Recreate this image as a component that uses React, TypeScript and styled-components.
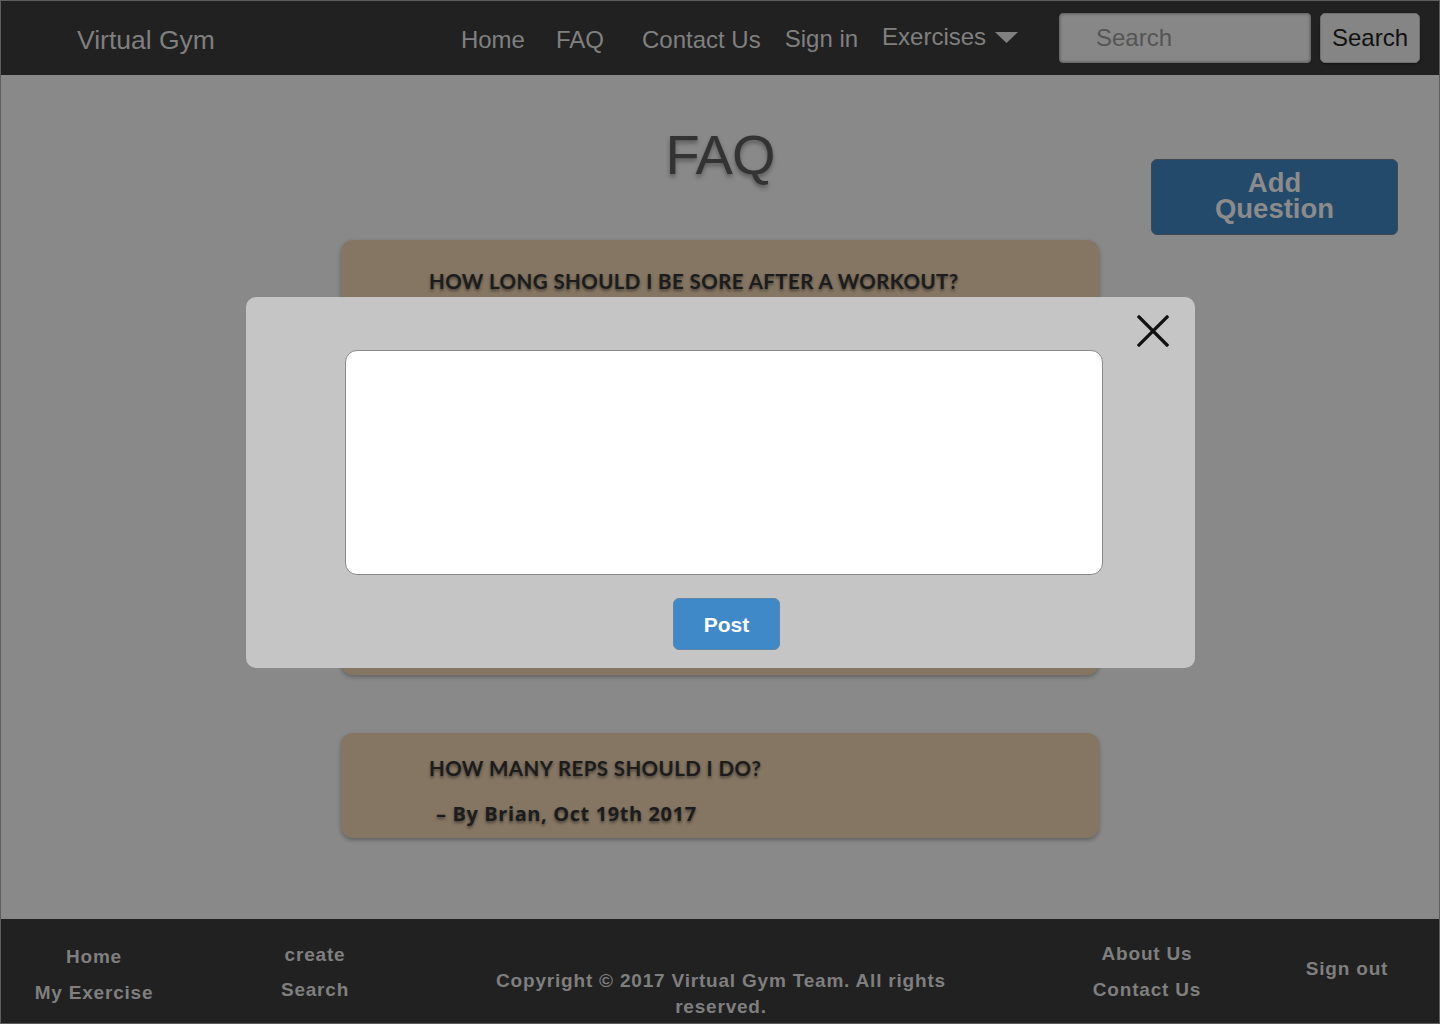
import React from "react";
import styled, { createGlobalStyle } from "styled-components";

const Global = createGlobalStyle`
  html, body { margin: 0; padding: 0; background: #898989; }
  body { font-family: "Liberation Sans", Arial, sans-serif; }
  * { box-sizing: border-box; }
`;

const Frame = styled.div`
  position: relative;
  width: 1440px;
  height: 1024px;
  border: 1px solid #5e5e5e;
  display: flex;
  flex-direction: column;
  background: #898989;
  overflow: hidden;
`;

const NavBar = styled.header`
  height: 74px;
  flex: none;
  background: #212121;
  display: flex;
  align-items: center;
  padding-left: 76px;
  padding-right: 19px;
`;

const Brand = styled.div`
  font-size: 26.5px;
  color: #7f7f7f;
  margin-top: 5px;
`;

const NavLinks = styled.nav`
  display: flex;
  align-items: center;
  margin-left: 246px;
  margin-top: 3px;
`;

const NavLink = styled.a<{ $ml: number; $dy?: number }>`
  font-size: 24px;
  color: #808080;
  margin-left: ${(p) => p.$ml}px;
  position: relative;
  top: ${(p) => p.$dy ?? 0}px;
  display: flex;
  align-items: center;
  white-space: nowrap;
`;

const Caret = styled.svg`
  margin-left: 9px;
  margin-top: 2px;
`;

const SearchForm = styled.form`
  margin-left: auto;
  margin-top: -1px;
  display: flex;
  gap: 9px;
  align-items: center;
`;

const SearchInput = styled.div`
  width: 252px;
  height: 50px;
  background: #878787;
  border: 1px solid #6a6a6a;
  border-radius: 4px;
  box-shadow: inset 0 0 3px rgba(0, 0, 0, 0.35);
  font-size: 24px;
  color: #555555;
  display: flex;
  align-items: center;
  padding-left: 36px;
`;

const SearchButton = styled.button`
  width: 100px;
  height: 50px;
  background: #858585;
  border: 1px solid #6f6f6f;
  border-radius: 5px;
  font-family: "Liberation Sans", Arial, sans-serif;
  font-size: 24px;
  color: #111111;
  padding: 0;
  box-shadow: 0 1px 2px rgba(0, 0, 0, 0.4);
`;

const Main = styled.main`
  flex: 1;
  display: grid;
  grid-template-columns: 340px 758px 1fr;
  align-items: start;
`;

const Center = styled.section`
  grid-column: 2;
  display: flex;
  flex-direction: column;
`;

const Title = styled.h1`
  margin: 48px 0 0;
  height: 117px;
  text-align: center;
  font-size: 56px;
  line-height: 64px;
  font-weight: 400;
  color: #333333;
  letter-spacing: -1px;
  text-shadow: 0 3px 4px rgba(0, 0, 0, 0.35);
`;

const Card = styled.article<{ $h: number; $pt: number }>`
  height: ${(p) => p.$h}px;
  background: #857663;
  border-radius: 12px;
  box-shadow: 0 2px 4px rgba(0, 0, 0, 0.3);
  padding: ${(p) => p.$pt}px 0 0 88px;
  & + & {
    margin-top: 58px;
  }
`;

const Question = styled.h2`
  margin: 0;
  font-family: "Lato", "Open Sans", sans-serif;
  font-weight: 700;
  font-size: 20.5px;
  line-height: 28px;
  letter-spacing: 0.4px;
  color: #1c1c1c;
  text-shadow: 0 2px 3px rgba(0, 0, 0, 0.45);
`;

const Byline = styled.p`
  margin: 18px 0 0 7px;
  font-family: "Open Sans", "DejaVu Sans", sans-serif;
  font-weight: 700;
  font-size: 20px;
  line-height: 28px;
  letter-spacing: 0.6px;
  color: #1c1c1c;
  text-shadow: 0 2px 3px rgba(0, 0, 0, 0.45);
`;

const Side = styled.aside`
  grid-column: 3;
  padding: 84px 0 0 52px;
`;

const AddButton = styled.button`
  width: 247px;
  height: 76px;
  background: #244a6b;
  border: 1px solid #3d4a55;
  border-radius: 6px;
  font-family: "Liberation Sans", Arial, sans-serif;
  font-weight: 700;
  font-size: 27.5px;
  line-height: 26px;
  color: #8b8b8b;
  padding: 0 0 3px;
`;

const Footer = styled.footer`
  height: 104px;
  flex: none;
  background: #212121;
  display: grid;
  grid-template-columns: 186px 256px 556px 256px 1fr;
`;

const FooterCol = styled.div<{ $pt: number; $pl?: number; $lh?: number }>`
  padding-top: ${(p) => p.$pt}px;
  padding-left: ${(p) => p.$pl ?? 0}px;
  display: flex;
  flex-direction: column;
  align-items: center;
  font-weight: 700;
  font-size: 19px;
  letter-spacing: 0.8px;
  line-height: ${(p) => p.$lh ?? 36}px;
  color: #7f7f7f;
  text-align: center;
`;

const Copyright = styled.p`
  margin: 0;
  max-width: 470px;
`;

const Modal = styled.div`
  position: absolute;
  left: 245px;
  top: 296px;
  width: 949px;
  height: 371px;
  background: #c5c5c5;
  border-radius: 10px;
  display: flex;
  flex-direction: column;
  align-items: center;
  padding: 53px 92px 0 99px;
`;

const CloseButton = styled.button`
  position: absolute;
  top: 17px;
  right: 25px;
  width: 34px;
  height: 34px;
  border: none;
  background: transparent;
  padding: 0;
  display: flex;
  align-items: center;
  justify-content: center;
`;

const TextArea = styled.textarea`
  width: 758px;
  height: 225px;
  background: #ffffff;
  border: 1px solid #8a8a8a;
  border-radius: 12px;
  resize: none;
  outline: none;
`;

const PostButton = styled.button`
  margin-top: 23px;
  margin-left: 5px;
  width: 107px;
  height: 52px;
  background: #3f89c9;
  border: 1px solid #5f86a8;
  border-radius: 6px;
  font-family: "Liberation Sans", Arial, sans-serif;
  font-weight: 700;
  font-size: 21px;
  color: #ffffff;
  padding: 2px 0 0;
`;

export default function App() {
  return (
    <>
      <Global />
      <Frame>
        <NavBar>
          <Brand>Virtual Gym</Brand>
          <NavLinks>
            <NavLink $ml={0}>Home</NavLink>
            <NavLink $ml={31}>FAQ</NavLink>
            <NavLink $ml={38}>Contact Us</NavLink>
            <NavLink $ml={24} $dy={-1}>Sign in</NavLink>
            <NavLink $ml={24} $dy={-3}>
              Exercises
              <Caret width="23" height="11" viewBox="0 0 23 11">
                <polygon points="0,0 23,0 11.5,11" fill="#808080" />
              </Caret>
            </NavLink>
          </NavLinks>
          <SearchForm onSubmit={(e) => e.preventDefault()}>
            <SearchInput>Search</SearchInput>
            <SearchButton type="button">Search</SearchButton>
          </SearchForm>
        </NavBar>

        <Main>
          <Center>
            <Title>FAQ</Title>
            <Card $h={435} $pt={27}>
              <Question>HOW LONG SHOULD I BE SORE AFTER A WORKOUT?</Question>
            </Card>
            <Card $h={105} $pt={21}>
              <Question>HOW MANY REPS SHOULD I DO?</Question>
              <Byline>– By Brian, Oct 19th 2017</Byline>
            </Card>
          </Center>
          <Side>
            <AddButton>
              Add
              <br />
              Question
            </AddButton>
          </Side>
        </Main>

        <Footer>
          <FooterCol $pt={20}>
            <span>Home</span>
            <span>My Exercise</span>
          </FooterCol>
          <FooterCol $pt={18} $lh={35}>
            <span>create</span>
            <span>Search</span>
          </FooterCol>
          <FooterCol $pt={49} $lh={26}>
            <Copyright>Copyright © 2017 Virtual Gym Team. All rights reserved.</Copyright>
          </FooterCol>
          <FooterCol $pt={17} $pl={40}>
            <span>About Us</span>
            <span>Contact Us</span>
          </FooterCol>
          <FooterCol $pt={32}>
            <span>Sign out</span>
          </FooterCol>
        </Footer>

        <Modal>
          <CloseButton aria-label="Close">
            <svg width="32" height="32" viewBox="0 0 32 32">
              <path d="M2 2 L30 30 M30 2 L2 30" stroke="#111" strokeWidth="3.2" strokeLinecap="square" />
            </svg>
          </CloseButton>
          <TextArea />
          <PostButton>Post</PostButton>
        </Modal>
      </Frame>
    </>
  );
}
